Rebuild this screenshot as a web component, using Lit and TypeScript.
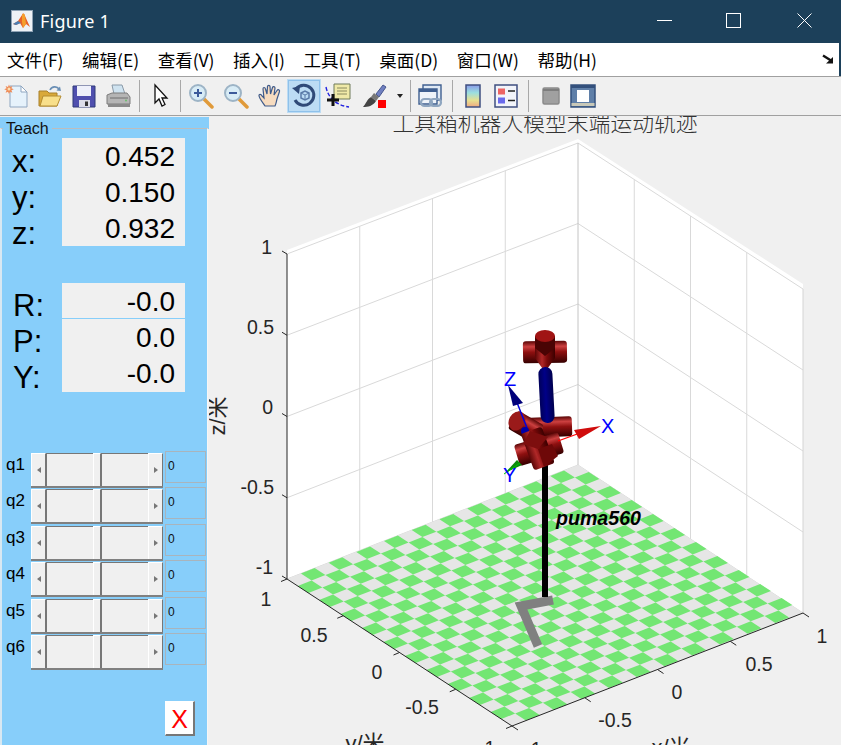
import { LitElement, html, css, svg } from "lit";
import { customElement } from "lit/decorators.js";

const MENU = ["文件(F)", "编辑(E)", "查看(V)", "插入(I)", "工具(T)", "桌面(D)", "窗口(W)", "帮助(H)"];
const XYZ = [["x:", "0.452"], ["y:", "0.150"], ["z:", "0.932"]];
const RPY = [["R:", "-0.0"], ["P:", "0.0"], ["Y:", "-0.0"]];
const JOINTS = ["q1", "q2", "q3", "q4", "q5", "q6"];

type P = [number, number];
const L: P = [287, 579], R: P = [803, 613], B: P = [578, 465], F: P = [512, 726];
const N = 21;
const mix = (a: P, b: P, t: number): P => [a[0] + (b[0] - a[0]) * t, a[1] + (b[1] - a[1]) * t];
const floorPt = (u: number, v: number): P => {
  return [L[0] + (B[0] - L[0]) * u + (F[0] - L[0]) * v, L[1] + (B[1] - L[1]) * u + (F[1] - L[1]) * v];
};
const pts = (a: P[]) => a.map((p) => `${p[0].toFixed(1)},${p[1].toFixed(1)}`).join(" ");

const tiles = () => {
  const out = [];
  for (let i = 0; i < N; i++)
    for (let j = 0; j < N; j++) {
      if ((i + j) % 2 === 0) continue;
      out.push(
        svg`<polygon fill="#73e673" points=${pts([
          floorPt(i / N, j / N),
          floorPt((i + 1) / N, j / N),
          floorPt((i + 1) / N, (j + 1) / N),
          floorPt(i / N, (j + 1) / N),
        ])}></polygon>`
      );
    }
  return out;
};

const cyl = (cx: number, cy: number, hl: number, r: number, a: number, fill = "url(#red)") =>
  svg`<rect x=${cx - hl} y=${cy - r} width=${hl * 2} height=${r * 2} rx="3" fill=${fill} transform="rotate(${a} ${cx} ${cy})"></rect>`;

const line = (a: P, b: P, c: string, w = 1) =>
  svg`<line x1=${a[0]} y1=${a[1]} x2=${b[0]} y2=${b[1]} stroke=${c} stroke-width=${w}></line>`;

const wallGrid = () => {
  const g = "#d9d9d9";
  const out = [];
  const lt: P = [287, 254], lb: P = L, bt: P = [578, 143], bb: P = B, rt: P = [803, 289], rb: P = R;
  for (let i = 0; i <= 4; i++) {
    const t = i / 4;
    out.push(line(mix(lt, lb, t), mix(bt, bb, t), g));
    out.push(line(mix(bt, bb, t), mix(rt, rb, t), g));
  }
  for (const t of [0.25, 0.5, 0.75]) {
    out.push(line(mix(lt, bt, t), mix(lb, bb, t), g));
    out.push(line(mix(bt, rt, t), mix(bb, rb, t), g));
  }
  out.push(line(bt, bb, "#c4c4c4"));
  out.push(line(rt, rb, "#d4d4d4"));
  return out;
};

const axes = () => {
  const c = "#262626";
  const out = [line([287, 254], L, c), line(L, F, c), line(F, R, c)];
  for (let i = 0; i <= 4; i++) {
    const t = i / 4;
    const z = mix([287, 254], L, t);
    out.push(line(z, [z[0] - 5, z[1] - 3], c));
    const y = mix(L, F, t);
    out.push(line(y, [y[0] - 6, y[1] + 2.5], c));
    const x = mix(F, R, t);
    out.push(line(x, [x[0] + 6, x[1] + 4], c));
  }
  return out;
};

const ICONS: Record<string, unknown> = {
  new: html`<svg viewBox="0 0 26 26"><path d="M6 3H17L23 9V24H6Z" fill="#e6f2fb" stroke="#8fa6c0"/><path d="M17 3V9H23Z" fill="#fff" stroke="#8fa6c0"/><path d="M5 1.5l1 2.4 2.4-1-1 2.4 2.4 1-2.4 1 1 2.4-2.4-1-1 2.4-1-2.4-2.4 1 1-2.4-2.4-1 2.4-1-1-2.4 2.4 1z" fill="#ef8a55"/><circle cx="5" cy="6" r="1.5" fill="#fbe0b0"/></svg>`,
  open: html`<svg viewBox="0 0 26 26"><path d="M2 8H10L12 10H20V23H2Z" fill="#d9a93a" stroke="#a8802a"/><path d="M3 23L6 13H24L20 23Z" fill="#f8df8a" stroke="#b48c30"/><path d="M13 7C15 3 20 3 22 6" fill="none" stroke="#6a8fb5" stroke-width="1.6"/><path d="M24 8L19.5 7.5 23 3.5Z" fill="#6a8fb5"/></svg>`,
  save: html`<svg viewBox="0 0 26 26"><path d="M2 3H24V24H2Z" fill="#4f4fae" stroke="#2e3a78"/><path d="M6 3H20V13H6Z" fill="#eef0fa"/><path d="M8 17H19V24H8Z" fill="#dcdde8"/><path d="M14 18.500H17V23H14Z" fill="#333"/></svg>`,
  print: html`<svg viewBox="0 0 26 26"><path d="M7 2H17L20 11H9Z" fill="#cfe3f0" stroke="#8a9aa8"/><path d="M2 12L7 10H22L25 14V21H2Z" fill="#b5b5b5" stroke="#7d7d7d"/><path d="M3 21H25V24H3Z" fill="#8a8a8a"/><path d="M5 15H23" stroke="#6f6f6f"/><circle cx="21" cy="17.500" r="1" fill="#6abf6a"/></svg>`,
  cursor: html`<svg viewBox="0 0 26 26"><path d="M7 2V20L11 16L14 23L17 21.500L14 15H19Z" fill="#fff" stroke="#111" stroke-width="1.300"/></svg>`,
  zin: html`<svg viewBox="0 0 26 26"><path d="M15 15L24 24" stroke="#e09a3a" stroke-width="3.500" stroke-linecap="round"/><circle cx="10" cy="10" r="8" fill="#d8ecf6" stroke="#9db4c6" stroke-width="2"/><path d="M6 10H14M10 6V14" stroke="#3c5a9a" stroke-width="2"/></svg>`,
  zout: html`<svg viewBox="0 0 26 26"><path d="M15 15L24 24" stroke="#e09a3a" stroke-width="3.500" stroke-linecap="round"/><circle cx="10" cy="10" r="8" fill="#d8ecf6" stroke="#9db4c6" stroke-width="2"/><path d="M6 10H14" stroke="#3c5a9a" stroke-width="2"/></svg>`,
  pan: html`<svg viewBox="0 0 26 26"><path d="M8 23C6 20 2 15 2 12.500C2 11 4 11 5 13L7 15L6 6C6 4 8 4 8.500 6L10 11L10.500 3.500C10.500 2 13 2 13 3.500L13.500 11L15.500 4.500C16 3 18 3.500 18 5L17 12L20 7.500C21 6 23 7 22.500 8.500L20 16C19 20 19 21 18 23Z" fill="#f7dcc0" stroke="#3e5a8a" stroke-width="1.200"/></svg>`,
  rot: html`<svg viewBox="0 0 26 26"><path d="M5 6A10 10 0 1 1 4 17" fill="none" stroke="#2f4a78" stroke-width="3"/><path d="M1 5L9 3 8 11Z" fill="#2f4a78"/><path d="M10 10L14 8 18 10V15L14 17 10 15Z" fill="none" stroke="#5a7aa8" stroke-width="1.500"/><path d="M14 12V17M10 10L14 12 18 10" stroke="#5a7aa8" fill="none"/></svg>`,
  data: html`<svg viewBox="0 0 26 26"><path d="M9 1H25V16H9Z" fill="#efe9a8" stroke="#6e7a5a"/><path d="M12 5H22M12 8H22M12 11H22" stroke="#8a8a60"/><path d="M1 4C3 14 10 22 24 24" fill="none" stroke="#2222e0" stroke-width="1.400" stroke-dasharray="4 2"/><path d="M8 11V23M2 17H14" stroke="#111" stroke-width="3"/></svg>`,
  brush: html`<svg viewBox="0 0 26 26"><path d="M15 11L22 2L25 4L18 14Z" fill="#6f7fc0" stroke="#46568e"/><path d="M13 10L18 14L15 18L10 14Z" fill="#777"/><path d="M10 14L15 18C12 23 7 24 2 24C5 21 6 16 10 14Z" fill="#444"/><rect x="17" y="17" width="8" height="8" fill="#f00"/></svg>`,
  link: html`<svg viewBox="0 0 26 26"><path d="M5 2H23V17H5Z" fill="#dfe9f4" stroke="#3f5f90" stroke-width="1.400"/><path d="M1 6H19V21H1Z" fill="#eef3f9" stroke="#3f5f90" stroke-width="1.400"/><path d="M1 6H19V9H1Z" fill="#3f5f90"/><rect x="3" y="16" width="11" height="7" rx="3.500" fill="none" stroke="#8fa6c0" stroke-width="2.200"/><rect x="12" y="16" width="11" height="7" rx="3.500" fill="none" stroke="#8fa6c0" stroke-width="2.200"/></svg>`,
  cbar: html`<svg viewBox="0 0 26 26"><defs><linearGradient id="cb" x1="0" y1="0" x2="0" y2="1"><stop offset="0" stop-color="#8a9ae8"/><stop offset=".35" stop-color="#9adfe0"/><stop offset=".7" stop-color="#e8e090"/><stop offset="1" stop-color="#f0a880"/></linearGradient></defs><rect x="6" y="2" width="14" height="22" fill="url(#cb)" stroke="#3f4f80" stroke-width="1.500"/></svg>`,
  legend: html`<svg viewBox="0 0 26 26"><rect x="2" y="2" width="22" height="22" fill="#f2f4fa" stroke="#3f4f80" stroke-width="1.500"/><rect x="5" y="5.500" width="7" height="6" fill="#ec6464"/><rect x="5" y="14.500" width="7" height="6" fill="#6a6aec"/><path d="M15 8H22M15 17.500H22" stroke="#222" stroke-width="1.500"/></svg>`,
  gray: html`<svg viewBox="0 0 26 26"><rect x="5" y="5" width="16" height="16" rx="1.500" fill="#a0a0a0" stroke="#8a8a8a" stroke-width="1.500"/><path d="M5 7H21" stroke="#7d7d7d" stroke-width="2"/></svg>`,
  tools: html`<svg viewBox="0 0 26 26"><rect x="1" y="2" width="24" height="22" fill="#5f7fa8" stroke="#33507c" stroke-width="1.500"/><rect x="1" y="2" width="24" height="3" fill="#33507c"/><rect x="7" y="7" width="12" height="12" fill="#fff"/><rect x="1.500" y="20" width="23" height="3" fill="#c8c8b8"/></svg>`,
};

const TOOLS: { w: number; k: string; on?: boolean }[] = [
  { w: 33, k: "new" }, { w: 33, k: "open" }, { w: 35, k: "save" }, { w: 34, k: "print" },
  { w: 9, k: "sep" }, { w: 34, k: "cursor" }, { w: 5, k: "sep" },
  { w: 36, k: "zin" }, { w: 34, k: "zout" }, { w: 34, k: "pan" }, { w: 34, k: "rot", on: true },
  { w: 34, k: "data" }, { w: 38, k: "brush" }, { w: 13, k: "arrow" }, { w: 8, k: "sep" },
  { w: 34, k: "link" }, { w: 8, k: "sep" }, { w: 34, k: "cbar" }, { w: 32, k: "legend" },
  { w: 12, k: "sep" }, { w: 34, k: "gray" }, { w: 30, k: "tools" },
];

@customElement("app-root")
export class AppRoot extends LitElement {
  static styles = css`
    :host { display: block; width: 841px; height: 745px; overflow: hidden; background: #f0f0f0; font-family: "Liberation Sans", Arial, sans-serif; color: #000; }
    .title { height: 43px; box-sizing: border-box; padding: 0 0 2px 11px; background: #1c405a; display: flex; align-items: center; color: #fff; }
    .logo { width: 22px; height: 22px; display: block; }
    .caption { font: 18px "Noto Sans", sans-serif; margin-left: 7px; flex: 1; letter-spacing: .2px; }
    .win { display: flex; align-items: center; }
    .win svg { display: block; width: 15px; height: 15px; margin-right: 54px; }
    .win svg:nth-child(2) { margin-right: 56px; }
    .win svg:last-child { margin-right: 29px; }
    .menu { height: 33px; background: #fff; border-right: 2px solid #1c405a; display: flex; align-items: center; padding-left: 7px; gap: 18.500px; font: 17.500px "Noto Sans CJK SC", sans-serif; }
    .menu span { white-space: nowrap; }
    .dock { margin-left: auto; margin-right: 5px; width: 12px; height: 11px; display: block; }
    .tb { height: 38px; border-top: 1px solid #a0a0a0; border-bottom: 1px solid #a0a0a0; background: #f0f0f0; display: flex; align-items: center; }
    .slot { height: 38px; display: flex; align-items: center; justify-content: center; flex: none; }
    .slot svg { width: 26px; height: 26px; display: block; }
    .slot.on { background: #bcdcf4; outline: 1px solid #8fc1ea; outline-offset: -2px; height: 34px; }
    .sep { width: 1px; height: 32px; background: #a8a8a8; }
    .arr { width: 0; height: 0; border-left: 3.500px solid transparent; border-right: 3.500px solid transparent; border-top: 4px solid #222; }
    .main { display: flex; height: 629px; overflow: hidden; }
    .panel { width: 209px; flex: none; padding-top: 11px; box-sizing: border-box; position: relative; margin-top: 1px; background: linear-gradient(#87cefa 12px, #f0f0f0 12px); }
    .frame { height: 100%; box-sizing: border-box; margin: 0 1px 0 0; background: #87cefa; border-left: 2px solid #d8e8f2; border-right: 1px solid #f6f6f6; border-top: 1px solid #bdbdbd; padding-top: 9px; }
    .legend { position: absolute; left: 3px; top: 3px; padding: 0 3px; background: #87cefa; font-size: 16px; line-height: 18px; color: #111; }
    .read { display: grid; grid-template-columns: 60px 123px; grid-template-rows: 108px; }
    .labels { padding: 6px 0 0 10px; font-size: 31px; }
    .labels div { height: 36px; line-height: 36px; }
    .vals { background: #f0f0f0; font-size: 28px; text-align: right; }
    .vals div { height: 36px; line-height: 37px; padding-right: 10px; box-sizing: border-box; }
    .vals.div div:first-child { border-bottom: 1px solid #87cefa; }
    .rpy { margin-top: 37px; grid-template-rows: 109px; }
    .rpy .labels { padding: 5px 0 0 11px; }
    .sliders { margin-top: 61px; display: flex; flex-direction: column; gap: 1.400px; }
    .row { display: flex; height: 35px; }
    .q { width: 29px; font-size: 17px; line-height: 24px; padding-left: 4px; box-sizing: border-box; }
    .sb { width: 132px; height: 35px; box-sizing: border-box; border-bottom: 2px solid #808080; display: grid; grid-template-columns: 15px 1fr 8px 1fr 15px; background: #f0f0f0; }
    .btn { box-sizing: border-box; background: #f0f0f0; border: 1px solid; border-width: 1px 1px 0 1px; border-color: #fff #777 #777 #fff; display: flex; align-items: center; justify-content: center; }
    .track { background: #f0f0f0; border-top: 1px solid #777; border-left: 1px solid #777; }
    .al { border-top: 3.500px solid transparent; border-bottom: 3.500px solid transparent; border-right: 4px solid #777; }
    .ar { border-top: 3.500px solid transparent; border-bottom: 3.500px solid transparent; border-left: 4px solid #777; }
    .edit { width: 41px; height: 32px; box-sizing: border-box; margin: -2px 0 0 2px; border: 1px solid #a9b4bc; font-size: 12px; line-height: 28px; padding-left: 2px; color: #111; }
    .close { margin: 31px 0 0 163px; width: 30px; height: 35px; box-sizing: border-box; background: #fff; border: 1px solid; border-width: 1px 2px 2px 1px; border-color: #fff #777 #777 #fff; color: #f00; font-size: 25px; line-height: 34px; text-align: center; }
    .plot { flex: 1; min-width: 0; }
    .plot svg { display: block; }
    .t { font-family: "Liberation Sans", Arial, sans-serif; font-size: 19.500px; fill: #262626; }
    .c { font-family: "Liberation Sans", "Noto Sans CJK SC", sans-serif; font-size: 22px; fill: #262626; }
    .ttl { font-family: "Noto Sans CJK SC", sans-serif; font-size: 21.800px; font-weight: 300; fill: #333; }
    .tri { font-family: "Liberation Sans", Arial, sans-serif; font-size: 20px; fill: #0000ff; }
    .puma { font-family: "Liberation Sans", Arial, sans-serif; font-size: 19.600px; font-weight: bold; font-style: italic; fill: #000; }
  `;

  private slot_(t: { w: number; k: string; on?: boolean }) {
    const inner = t.k === "sep" ? html`<div class="sep"></div>` : t.k === "arrow" ? html`<div class="arr"></div>` : ICONS[t.k];
    return html`<div class="slot ${t.on ? "on" : ""}" style="width:${t.w}px">${inner}</div>`;
  }

  private plot() {
    const T = (x: number, y: number, s: string, a = "middle") =>
      svg`<text class="t" x=${x} y=${y} text-anchor=${a}>${s}</text>`;
    return html`<svg width="632" height="629" viewBox="209 116 632 629">
      <defs>
        <linearGradient id="red" x1="0" y1="0" x2="0" y2="1">
          <stop offset="0" stop-color="#5a0606"/><stop offset=".25" stop-color="#cc4040"/>
          <stop offset=".5" stop-color="#8e1010"/><stop offset="1" stop-color="#360000"/>
        </linearGradient>
        <linearGradient id="redv" x1="0" y1="0" x2="1" y2="0">
          <stop offset="0" stop-color="#5a0606"/><stop offset=".35" stop-color="#b02828"/>
          <stop offset=".6" stop-color="#7a0a0a"/><stop offset="1" stop-color="#3c0000"/>
        </linearGradient>
        <linearGradient id="navy" x1="0" y1="0" x2="1" y2="0">
          <stop offset="0" stop-color="#00005a"/><stop offset=".45" stop-color="#000088"/><stop offset="1" stop-color="#00004e"/>
        </linearGradient>
      </defs>
      <text class="ttl" x="545" y="131" text-anchor="middle">工具箱机器人模型末端运动轨迹</text>
      <polygon fill="#fff" points="287,250 578,139 578,465 287,579"></polygon>
      <polygon fill="#fff" points="578,139 803,284 803,613 578,465"></polygon>
      ${wallGrid()}
      <polygon fill="#e6e6e6" points=${pts([L, B, R, F])}></polygon>
      ${tiles()}
      ${axes()}
      ${T(272, 254, "1", "end")}${T(274, 334, "0.5", "end")}${T(273, 414, "0", "end")}${T(274, 494, "-0.5", "end")}${T(273, 574, "-1", "end")}
      ${T(266, 606, "1")}${T(314, 642, "0.5")}${T(377, 679, "0")}${T(422, 714, "-0.5")}
      ${T(822, 643, "1")}${T(759, 671, "0.5")}${T(677, 699, "0")}${T(615, 727, "-0.5")}
      ${T(490, 755, "1")}${T(533, 756, "-1")}
      <text class="c" transform="translate(225 416) rotate(-90)" text-anchor="middle">z/米</text>
      <text class="c" x="365" y="751" text-anchor="middle">y/米</text>
      <text class="c" x="671" y="755" text-anchor="middle">x/米</text>

      <polyline points="538,646 521,606 553,600" fill="none" stroke="#808080" stroke-width="9"></polyline>
      <rect x="542" y="462" width="6" height="135" fill="#000"></rect>

      ${cyl(545, 352, 22, 11, -1)}
      <path d="M535 336V358L545 372L555 358V336Z" fill="url(#redv)"></path>
      <path d="M535 337V348L545 356L555 348V337Z" fill="#4a0404"></path>
      <ellipse cx="545" cy="336" rx="10" ry="6" fill="#a01414"></ellipse>

      ${cyl(550, 427, 22, 10, -2)}
      <rect x="539.500" y="367" width="14" height="56" rx="7" fill="url(#navy)" transform="rotate(-3 547 395)"></rect>
      ${cyl(526, 427, 15, 10.500, 30)}
      <ellipse cx="517" cy="421" rx="8" ry="10" fill="#9a1a1a" transform="rotate(30 517 421)"></ellipse>
      <line x1="516" y1="400" x2="527" y2="428" stroke="#0000e0" stroke-width="1.500"></line>
      <polygon points="508,385 513,406 523,403" fill="#00007a"></polygon>
      <circle cx="525" cy="431" r="4" fill="#0000a8"></circle>
      ${cyl(539, 449, 23, 11, -17)}
      <rect x="527" y="429" width="22" height="39" rx="3" fill="url(#redv)" transform="rotate(-20 538 449)"></rect>
      <path d="M538 449L523 444L530 431L548 437Z" fill="#7d0e0e"></path>
      <path d="M538 449L552 444L558 456L544 467Z" fill="#6e0808"></path>
      <line x1="558" y1="441" x2="580" y2="433" stroke="#f00" stroke-width="1.300"></line>
      <polygon points="601,426 574,430 579,439" fill="#d00c0c"></polygon>
      <polygon points="505,473 517,460 522,465" fill="#0a8a0a"></polygon>
      <line x1="504" y1="474" x2="520" y2="463" stroke="#00c000" stroke-width="1"></line>
      <text class="tri" x="504" y="386">Z</text>
      <text class="tri" x="601" y="433">X</text>
      <text class="tri" x="503" y="482">Y</text>
      <text class="puma" x="556" y="525">puma560</text>
    </svg>`;
  }

  render() {
    return html`
      <div class="title">
        <svg class="logo" viewBox="0 0 22 22"><rect x=".5" y=".5" width="21" height="21" fill="#eef2f6" stroke="#8fa3b5"/><path d="M2 14L7 11L11 5C12 3 13 3 14 6L19 17L15 14L12 18L9 13L5 15Z" fill="#e8622a"/><path d="M2 14L7 11L10 13L5 15Z" fill="#4a7fb5"/><path d="M11 5C12 3 13 3 14 6L15 14L12 18L11 12Z" fill="#f4a02c"/></svg>
        <div class="caption">Figure 1</div>
        <div class="win">
          <svg viewBox="0 0 15 15"><path d="M0 7.500H15" stroke="#fff"/></svg>
          <svg viewBox="0 0 15 15"><rect x=".5" y=".5" width="14" height="14" fill="none" stroke="#fff"/></svg>
          <svg viewBox="0 0 15 15"><path d="M.5 .5L14.500 14.500M14.500 .5L.5 14.500" stroke="#fff"/></svg>
        </div>
      </div>
      <div class="menu">
        ${MENU.map((m) => html`<span>${m}</span>`)}
        <svg class="dock" viewBox="0 0 12 11"><path d="M1 1.500L9 6.500" stroke="#111" stroke-width="2.400"/><path d="M4 9.500H11V3Z" fill="#111"/></svg>
      </div>
      <div class="tb">${TOOLS.map((t) => this.slot_(t))}</div>
      <div class="main">
        <div class="panel">
          <div class="legend">Teach</div>
          <div class="frame">
            <div class="read">
              <div class="labels">${XYZ.map((r) => html`<div>${r[0]}</div>`)}</div>
              <div class="vals">${XYZ.map((r) => html`<div>${r[1]}</div>`)}</div>
            </div>
            <div class="read rpy">
              <div class="labels">${RPY.map((r) => html`<div>${r[0]}</div>`)}</div>
              <div class="vals div">${RPY.map((r) => html`<div>${r[1]}</div>`)}</div>
            </div>
            <div class="sliders">
              ${JOINTS.map(
                (q) => html`<div class="row">
                  <div class="q">${q}</div>
                  <div class="sb">
                    <div class="btn"><div class="al"></div></div>
                    <div class="track"></div>
                    <div class="btn"></div>
                    <div class="track"></div>
                    <div class="btn"><div class="ar"></div></div>
                  </div>
                  <div class="edit">0</div>
                </div>`
              )}
            </div>
            <div class="close">X</div>
          </div>
        </div>
        <div class="plot">${this.plot()}</div>
      </div>
    `;
  }
}
